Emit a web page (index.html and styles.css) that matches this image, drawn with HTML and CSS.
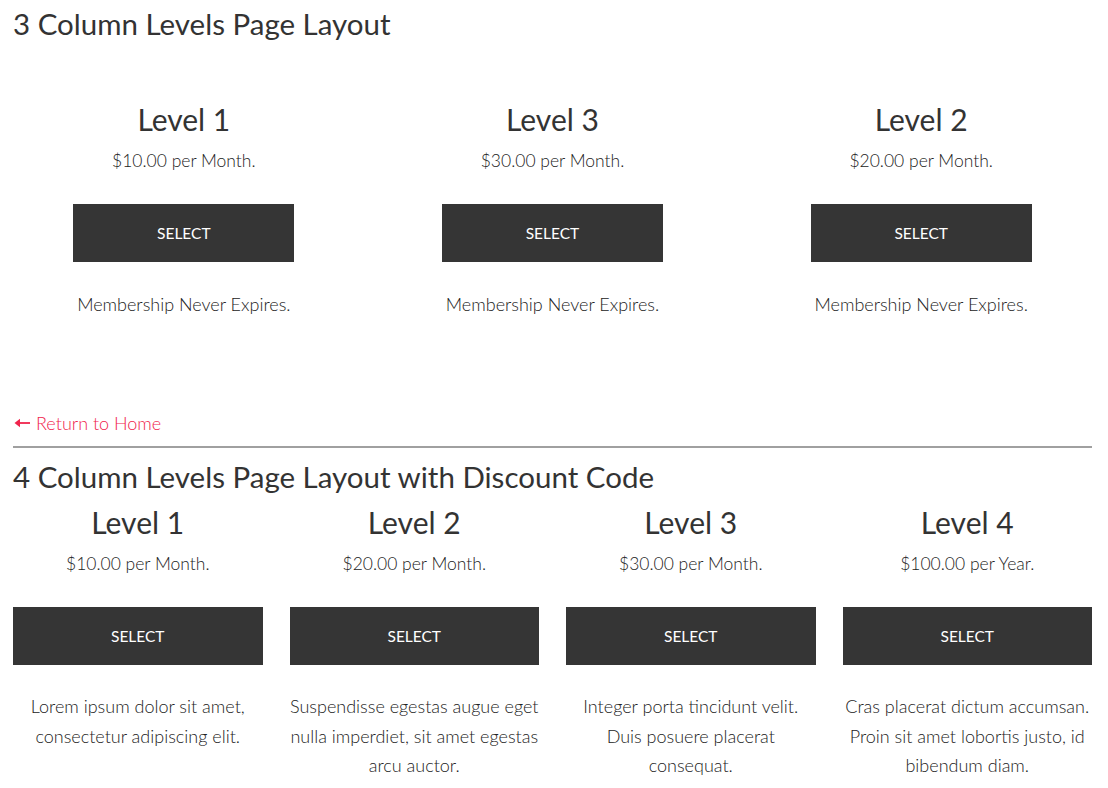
FILE: index.html
```html
<!DOCTYPE html>
<html lang="en">
<head>
<meta charset="utf-8">
<title>Levels</title>
<link rel="stylesheet" href="styles.css">
</head>
<body>
<div class="page">
  <h1 class="section-title first">3 Column Levels Page Layout</h1>
  <div class="levels cols-3">
    <div class="level">
      <h2 class="level-name">Level 1</h2>
      <p class="price">$10.00 per Month.</p>
      <a class="btn" href="#">SELECT</a>
      <div class="desc"><p>Membership Never Expires.</p></div>
    </div>
    <div class="level">
      <h2 class="level-name">Level 3</h2>
      <p class="price">$30.00 per Month.</p>
      <a class="btn" href="#">SELECT</a>
      <div class="desc"><p>Membership Never Expires.</p></div>
    </div>
    <div class="level">
      <h2 class="level-name">Level 2</h2>
      <p class="price">$20.00 per Month.</p>
      <a class="btn" href="#">SELECT</a>
      <div class="desc"><p>Membership Never Expires.</p></div>
    </div>
  </div>
  <a class="return" href="#"><svg class="arrow" width="16" height="12" viewBox="0 0 16 12" aria-hidden="true"><path d="M2 6H16" stroke="currentColor" stroke-width="1.8" fill="none"/><path d="M0.5 6L6 1.8V10.2Z" fill="currentColor"/></svg>Return to Home</a>
  <hr class="divider">
  <h2 class="section-title">4 Column Levels Page Layout with Discount Code</h2>
  <div class="levels cols-4">
    <div class="level">
      <h2 class="level-name">Level 1</h2>
      <p class="price">$10.00 per Month.</p>
      <a class="btn" href="#">SELECT</a>
      <div class="desc">
        <p>Lorem ipsum dolor sit amet, consectetur adipiscing elit.</p>
        <p>Membership Never Expires.</p>
      </div>
    </div>
    <div class="level">
      <h2 class="level-name">Level 2</h2>
      <p class="price">$20.00 per Month.</p>
      <a class="btn" href="#">SELECT</a>
      <div class="desc">
        <p>Suspendisse egestas augue eget nulla imperdiet, sit amet egestas arcu auctor.</p>
        <p>Membership Never Expires.</p>
      </div>
    </div>
    <div class="level">
      <h2 class="level-name">Level 3</h2>
      <p class="price">$30.00 per Month.</p>
      <a class="btn" href="#">SELECT</a>
      <div class="desc">
        <p>Integer porta tincidunt velit. Duis posuere placerat consequat.</p>
        <p>Membership Never Expires.</p>
      </div>
    </div>
    <div class="level">
      <h2 class="level-name">Level 4</h2>
      <p class="price">$100.00 per Year.</p>
      <a class="btn" href="#">SELECT</a>
      <div class="desc">
        <p>Cras placerat dictum accumsan. Proin sit amet lobortis justo, id bibendum diam.</p>
        <p>Membership Never Expires.</p>
      </div>
    </div>
  </div>
</div>
</body>
</html>
```

FILE: styles.css
```css
* { box-sizing: border-box; }
html, body {
  margin: 0;
  padding: 0;
  background: #fff;
}
body {
  font-family: Lato, "Open Sans", sans-serif;
  color: #222;
  font-weight: 300;
  font-size: 18px;
}
.page {
  width: 1079px;
  margin-left: 13px;
  display: flex;
  flex-direction: column;
}
.section-title {
  font-size: 29.5px;
  line-height: 36px;
  font-weight: 400;
  margin: 11px 0 0;
  color: #333;
}
.section-title.first { margin-top: 6px; }
.levels {
  display: grid;
  column-gap: 27px;
  text-align: center;
}
.cols-3 { grid-template-columns: repeat(3, 1fr); margin-top: 59px; }
.cols-4 { grid-template-columns: repeat(4, 1fr); margin-top: 9px; }
.level {
  display: flex;
  flex-direction: column;
  align-items: center;
}
.level-name {
  font-size: 30px;
  line-height: 36px;
  font-weight: 400;
  margin: 0;
  color: #333;
}
.price {
  margin: 12px 0 0;
  line-height: 24px;
  font-size: 17.5px;
}
.btn {
  display: flex;
  align-items: center;
  justify-content: center;
  margin-top: 31px;
  height: 58px;
  background: #353535;
  color: #fff;
  text-decoration: none;
  font-size: 15.5px;
  font-weight: 400;
  align-self: stretch;
}
.cols-3 .btn { align-self: center; width: 221px; }
.desc {
  margin-top: 28px;
  line-height: 29.5px;
  font-size: 18px;
}
.cols-4 .desc { margin-top: 27px; }
.desc p { margin: 0 0 29.5px; }
.return {
  margin-top: 62px;
  line-height: 24px;
  color: #f0244c;
  text-decoration: none;
  font-size: 18px;
  align-self: flex-start;
  display: flex;
  align-items: center;
}
.arrow {
  margin: 0 6px 0 1px;
}
.divider {
  width: 100%;
  margin: 11px 0 0;
  border: 0;
  height: 2px;
  background: #a0a0a0;
}
```
